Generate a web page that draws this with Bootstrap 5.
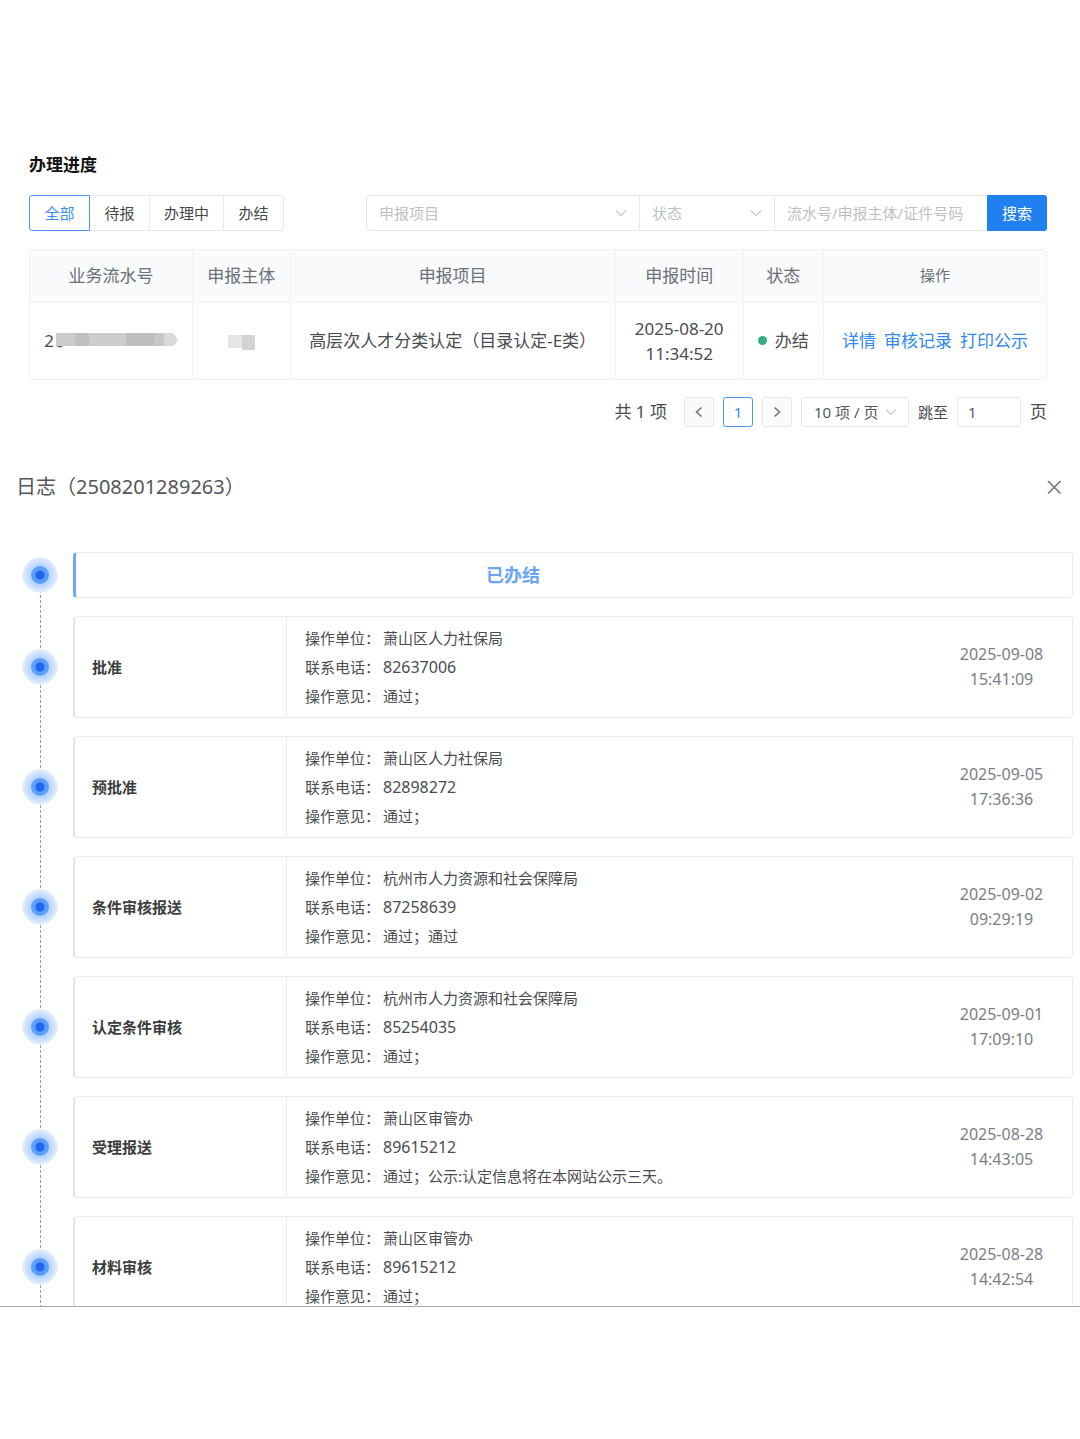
<!DOCTYPE html>
<html lang="zh-CN">
<head>
<meta charset="utf-8">
<meta name="viewport" content="width=device-width, initial-scale=1">
<title>办理进度</title>
<link href="https://cdn.jsdelivr.net/npm/bootstrap@5.3.0/dist/css/bootstrap.min.css" rel="stylesheet">
<style>
  :root { --line: #e6e8ec; --blue: #2080f0; --ink: #4a4c50; }
  body { font-family: "Noto Sans", "Noto Sans CJK SC", sans-serif; font-size: 15px; color: var(--ink); background: #fff; }
  .progress-area { padding: 155px 33px 0 29px; }
  .page-title { font-size: 17px; line-height: 20px; font-weight: 700; color: #111; margin-bottom: 20px; }

  /* filter bar */
  .filter-bar { margin-bottom: 18px; }
  .filter-tabs .btn { --bs-btn-color: #46484c; --bs-btn-border-color: var(--line); --bs-btn-border-radius: 3px;
    --bs-btn-active-color: #3a8bf5; --bs-btn-active-bg: #fff; --bs-btn-active-border-color: #4a98f7;
    --bs-btn-hover-color: #3a8bf5; --bs-btn-hover-border-color: #4a98f7;
    height: 36px; min-width: 61px; padding: 0 14px; font-size: 15px; line-height: 34px; }
  .search-group { width: 681px; }
  .search-group > * { height: 36px; font-size: 15px; line-height: 24px; }
  .search-group .form-select, .search-group .form-control { border-color: var(--line); border-radius: 3px; padding: 5px 12px; color: #bdbfc3; }
  .form-control::placeholder { color: #bdbfc3; opacity: 1; }
  .form-select { background-image: url("data:image/svg+xml,%3Csvg xmlns='http://www.w3.org/2000/svg' viewBox='0 0 12 12'%3E%3Cpath d='M1 3.5l5 5 5-5' fill='none' stroke='%23c3c5c9' stroke-width='1.1'/%3E%3C/svg%3E"); background-size: 12px 12px; background-position: right 12px center; }
  .search-group .pick-project { flex: 0 0 274px; }
  .search-group .pick-state { flex: 0 0 136px; }
  .search-group .btn { background: var(--blue); color: #fff; border: 0; border-radius: 3px; width: 60px; padding: 0; }

  /* records */
  .records { border: 1px solid #f0f1f4; border-radius: 4px; overflow: hidden; }
  .records table { table-layout: fixed; font-size: 17px; line-height: 25px; color: #4a4c50; text-align: center; }
  .records th, .records td { vertical-align: middle; padding: 0; color: inherit; border: 0 solid #f0f1f4; border-right-width: 1px; }
  .records th:last-child, .records td:last-child { border-right-width: 0; }
  .records th { height: 52px; background: #f9fafc; font-weight: 400; color: #6b6f76; border-bottom-width: 1px; }
  .records th.ops { font-size: 15px; }
  .records td { height: 77px; }
  .records a { color: #2f88f5; text-decoration: none; }
  .state-dot { width: 9px; height: 9px; background: #36ad7f; }

  /* pager */
  .pager { margin-top: 17px; font-size: 17px; gap: 9px; line-height: 30px; }
  .pager .btn { width: 30px; height: 30px; padding: 0; border: 1px solid var(--line); border-radius: 3px; background: #fafafc; color: #6b6f76; font-size: 15px; line-height: 26px; }
  .pager .btn.current { border-color: #4a98f7; background: #fff; color: #3a8bf5; }
  .pager .form-select, .pager .form-control { height: 30px; font-size: 15px; line-height: 20px; border-color: var(--line); border-radius: 3px; color: #55575b; padding: 2px 10px; }
  .pager .form-select { width: 108px; padding-left: 12px; padding-right: 14px; background-position: right 11px center; }
  .pager .form-control { width: 64px; }
  .pager .jump { font-size: 15px; }

  /* log */
  .log-head { margin: 45px 16px 50px; }
  .log-title { font-size: 20px; line-height: 30px; font-weight: 400; color: #55565a; }
  .log-close { border: 0; background: none; padding: 1px; line-height: 0; }
  .log-view { max-height: 755px; overflow: hidden; border-bottom: 1px solid #a9a9a9; }
  .log-list { gap: 18px; padding: 0 7px 0 22px; position: relative; }
  .log-list::before { content: ""; position: absolute; left: 40px; top: 23px; bottom: 0; border-left: 1px dashed #9a9a9a; }
  .log-list li { gap: 15px; position: relative; }
  .log-card { border: 1px solid #eaebed; border-left: 2px solid #e3e5e8; border-radius: 4px; min-height: 102px; }
  .log-card.finished { min-height: 46px; border-left: 3px solid #6fa8f8; padding-right: 122px; font-size: 18px; font-weight: 700; color: #6aa6f8; }
  .step-name { width: 212px; padding-left: 17px; border-right: 1px solid #eaebed; font-weight: 700; color: #3c3d40; }
  .step-info { padding-left: 18px; line-height: 29px; }
  .step-info dt { width: 78px; font-weight: 400; }
  .step-info dd { margin: 0; }
  .step-info .tel { font-size: 16px; }
  .step-time { width: 141px; font-size: 16px; line-height: 25px; color: #7b7e85; }
</style>
<script src="https://cdn.jsdelivr.net/npm/bootstrap@5.3.0/dist/js/bootstrap.bundle.min.js"></script>
</head>
<body>
<svg class="d-none" xmlns="http://www.w3.org/2000/svg">
  <symbol id="pulse" viewBox="0 0 36 36">
    <circle cx="18" cy="18" r="17.500" fill="#dde9fe"/>
    <circle cx="18" cy="18" r="15" fill="#cde1fe"/>
    <circle cx="18" cy="18" r="12" fill="#b9d6fe"/>
    <circle cx="18" cy="18" r="9" fill="#5b9ffa"/>
    <circle cx="18" cy="18" r="4.600" fill="#2563eb"/>
  </symbol>
</svg>

<section class="progress-area">
  <h1 class="page-title">办理进度</h1>

  <form class="filter-bar d-flex justify-content-between">
    <div class="filter-tabs btn-group" role="group" aria-label="办理状态">
      <input type="radio" class="btn-check" name="stage" id="st-all" checked><label class="btn" for="st-all">全部</label>
      <input type="radio" class="btn-check" name="stage" id="st-wait"><label class="btn" for="st-wait">待报</label>
      <input type="radio" class="btn-check" name="stage" id="st-doing"><label class="btn" for="st-doing">办理中</label>
      <input type="radio" class="btn-check" name="stage" id="st-done"><label class="btn" for="st-done">办结</label>
    </div>
    <div class="search-group input-group">
      <select class="form-select pick-project" aria-label="申报项目"><option>申报项目</option></select>
      <select class="form-select pick-state" aria-label="状态"><option>状态</option></select>
      <input class="form-control" type="text" placeholder="流水号/申报主体/证件号码" aria-label="流水号/申报主体/证件号码">
      <button class="btn" type="button">搜索</button>
    </div>
  </form>

  <div class="records">
    <table class="table mb-0">
      <colgroup><col style="width:16%"><col style="width:9.6%"><col style="width:32%"><col style="width:12.6%"><col style="width:7.9%"><col style="width:21.9%"></colgroup>
      <thead><tr><th>业务流水号</th><th>申报主体</th><th>申报项目</th><th>申报时间</th><th>状态</th><th class="ops">操作</th></tr></thead>
      <tbody><tr>
        <td><div class="d-flex align-items-center justify-content-center">2<svg width="124" height="16" viewBox="0 0 124 16" aria-hidden="true">
          <path d="M2 12q5 4 7-1" fill="none" stroke="#66686c" stroke-width="1.500"/>
          <path d="M2 0h19v13H2z" fill="#cbcbcc"/><path d="M21 0h14v13H21z" fill="#bfbfc0"/><path d="M35 0h37v13H35z" fill="#cdcdce"/><path d="M72 0h28v13H72z" fill="#bebec0"/><path d="M100 0h10v13h-10z" fill="#c8c8ca"/><path d="M110 0h9l5 7-4 6h-10z" fill="#d9d9db"/></svg></div></td>
        <td><svg width="27" height="16" viewBox="0 0 27 16" aria-hidden="true"><path d="M0 0h14v13H0z" fill="#e4e5e6"/><path d="M14 0h13v15H14z" fill="#d2d3d5"/></svg></td>
        <td>高层次人才分类认定（目录认定-E类）</td>
        <td>2025-08-20<br>11:34:52</td>
        <td><div class="d-flex align-items-center justify-content-center gap-2"><span class="state-dot rounded-circle"></span>办结</div></td>
        <td><div class="d-flex justify-content-center gap-2"><a href="#">详情</a><a href="#">审核记录</a><a href="#">打印公示</a></div></td>
      </tr></tbody>
    </table>
  </div>

  <nav class="pager d-flex justify-content-end align-items-center" aria-label="分页">
    <span class="me-2">共 1 项</span>
    <button class="btn d-flex align-items-center justify-content-center" type="button" aria-label="上一页"><svg width="12" height="12" viewBox="0 0 12 12" fill="none" stroke="currentColor" stroke-width="1.500"><path d="M8.500 1.500L3.500 6l5 4.500"/></svg></button>
    <button class="btn current" type="button">1</button>
    <button class="btn d-flex align-items-center justify-content-center" type="button" aria-label="下一页"><svg width="12" height="12" viewBox="0 0 12 12" fill="none" stroke="currentColor" stroke-width="1.500"><path d="M3.500 1.500L8.500 6l-5 4.500"/></svg></button>
    <select class="form-select" aria-label="每页条数"><option>10 项 / 页</option></select>
    <label class="jump" for="jump">跳至</label>
    <input class="form-control" id="jump" type="text" value="1">
    <span>页</span>
  </nav>
</section>

<section>
  <header class="log-head d-flex justify-content-between align-items-center">
    <h2 class="log-title mb-0">日志（2508201289263）</h2>
    <button class="log-close" type="button" aria-label="关闭"><svg width="18" height="18" viewBox="0 0 18 18" fill="none" stroke="#77797c" stroke-width="1.700"><path d="M3 3l12.500 12.500M15.500 3L3 15.500"/></svg></button>
  </header>

  <div class="log-view">
    <ol class="log-list list-unstyled d-flex flex-column mb-0">
      <li class="d-flex align-items-center"><svg width="36" height="36"><use href="#pulse"/></svg>
        <div class="log-card finished flex-fill d-flex align-items-center justify-content-center">已办结</div></li>
      <li class="d-flex align-items-center"><svg width="36" height="36"><use href="#pulse"/></svg>
        <div class="log-card flex-fill d-flex">
          <div class="step-name d-flex align-items-center">批准</div>
          <dl class="step-info flex-fill mb-0 align-self-center">
            <div class="d-flex"><dt>操作单位：</dt><dd>萧山区人力社保局</dd></div>
            <div class="d-flex"><dt>联系电话：</dt><dd class="tel">82637006</dd></div>
            <div class="d-flex"><dt>操作意见：</dt><dd>通过；</dd></div>
          </dl>
          <div class="step-time text-center align-self-center">2025-09-08<br>15:41:09</div>
        </div></li>
      <li class="d-flex align-items-center"><svg width="36" height="36"><use href="#pulse"/></svg>
        <div class="log-card flex-fill d-flex">
          <div class="step-name d-flex align-items-center">预批准</div>
          <dl class="step-info flex-fill mb-0 align-self-center">
            <div class="d-flex"><dt>操作单位：</dt><dd>萧山区人力社保局</dd></div>
            <div class="d-flex"><dt>联系电话：</dt><dd class="tel">82898272</dd></div>
            <div class="d-flex"><dt>操作意见：</dt><dd>通过；</dd></div>
          </dl>
          <div class="step-time text-center align-self-center">2025-09-05<br>17:36:36</div>
        </div></li>
      <li class="d-flex align-items-center"><svg width="36" height="36"><use href="#pulse"/></svg>
        <div class="log-card flex-fill d-flex">
          <div class="step-name d-flex align-items-center">条件审核报送</div>
          <dl class="step-info flex-fill mb-0 align-self-center">
            <div class="d-flex"><dt>操作单位：</dt><dd>杭州市人力资源和社会保障局</dd></div>
            <div class="d-flex"><dt>联系电话：</dt><dd class="tel">87258639</dd></div>
            <div class="d-flex"><dt>操作意见：</dt><dd>通过；通过</dd></div>
          </dl>
          <div class="step-time text-center align-self-center">2025-09-02<br>09:29:19</div>
        </div></li>
      <li class="d-flex align-items-center"><svg width="36" height="36"><use href="#pulse"/></svg>
        <div class="log-card flex-fill d-flex">
          <div class="step-name d-flex align-items-center">认定条件审核</div>
          <dl class="step-info flex-fill mb-0 align-self-center">
            <div class="d-flex"><dt>操作单位：</dt><dd>杭州市人力资源和社会保障局</dd></div>
            <div class="d-flex"><dt>联系电话：</dt><dd class="tel">85254035</dd></div>
            <div class="d-flex"><dt>操作意见：</dt><dd>通过；</dd></div>
          </dl>
          <div class="step-time text-center align-self-center">2025-09-01<br>17:09:10</div>
        </div></li>
      <li class="d-flex align-items-center"><svg width="36" height="36"><use href="#pulse"/></svg>
        <div class="log-card flex-fill d-flex">
          <div class="step-name d-flex align-items-center">受理报送</div>
          <dl class="step-info flex-fill mb-0 align-self-center">
            <div class="d-flex"><dt>操作单位：</dt><dd>萧山区审管办</dd></div>
            <div class="d-flex"><dt>联系电话：</dt><dd class="tel">89615212</dd></div>
            <div class="d-flex"><dt>操作意见：</dt><dd>通过；公示:认定信息将在本网站公示三天。</dd></div>
          </dl>
          <div class="step-time text-center align-self-center">2025-08-28<br>14:43:05</div>
        </div></li>
      <li class="d-flex align-items-center"><svg width="36" height="36"><use href="#pulse"/></svg>
        <div class="log-card flex-fill d-flex">
          <div class="step-name d-flex align-items-center">材料审核</div>
          <dl class="step-info flex-fill mb-0 align-self-center">
            <div class="d-flex"><dt>操作单位：</dt><dd>萧山区审管办</dd></div>
            <div class="d-flex"><dt>联系电话：</dt><dd class="tel">89615212</dd></div>
            <div class="d-flex"><dt>操作意见：</dt><dd>通过；</dd></div>
          </dl>
          <div class="step-time text-center align-self-center">2025-08-28<br>14:42:54</div>
        </div></li>
    </ol>
  </div>
</section>
</body>
</html>
